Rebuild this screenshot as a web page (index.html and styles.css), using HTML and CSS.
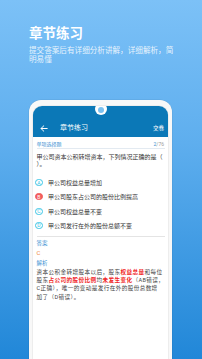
FILE: index.html
```html
<!DOCTYPE html>
<html lang="zh-CN">
<head>
<meta charset="utf-8">
<title>章节练习</title>
<link rel="stylesheet" href="styles.css">
</head>
<body>
<div class="page">
  <header class="hero">
    <h1 class="hero-title">章节练习</h1>
    <p class="hero-sub">提交答案后有详细分析讲解，详细解析，简明易懂</p>
  </header>
  <div class="phone">
    <div class="screen">
      <div class="appbar">
        <div class="notch"><span class="camera"></span></div>
        <div class="nav">
          <svg class="back" viewBox="0 0 8 7" width="8" height="7"><path d="M7.2 3.5H1M3.8 0.8L1 3.5L3.8 6.2" fill="none" stroke="#fff" stroke-width="1" stroke-linecap="round" stroke-linejoin="round"/></svg>
          <span class="nav-title">章节练习</span>
          <span class="nav-action">交卷</span>
        </div>
      </div>
      <div class="content">
        <div class="type-row">
          <span class="type">单项选择题</span>
          <span class="progress"><span class="cur">2</span>/76</span>
        </div>
        <p class="question">甲公司资本公积转增资本，下列情况正确的是（ ）。</p>
        <ul class="options">
          <li class="option"><span class="mark">A</span><span>甲公司权益总量增加</span></li>
          <li class="option wrong"><span class="mark">B</span><span>甲公司股东占公司的股份比例提高</span></li>
          <li class="option"><span class="mark">C</span><span>甲公司权益总量不变</span></li>
          <li class="option"><span class="mark">D</span><span>甲公司发行在外的股份总额不变</span></li>
        </ul>
        <div class="answer">
          <div class="label">答案</div>
          <div class="answer-value">C</div>
          <div class="label">解析</div>
          <p class="analysis">资本公积金转增股本以后，股东<span class="hl">权益总量</span>和每位<br>股东<span class="hl">占公司的股份比例</span>均<span class="hl">未发生变化</span>（AB错误，<br>C正确），唯一的变动是发行在外的股份总数增<br>加了（D错误）。</p>
        </div>
      </div>
    </div>
  </div>
</div>
</body>
</html>
```
FILE: styles.css
```css
* { box-sizing: border-box; }
html, body { margin: 0; padding: 0; }
body {
  width: 202px;
  height: 359px;
  overflow: hidden;
  font-family: Roboto, "Noto Sans CJK SC", sans-serif;
  background: linear-gradient(180deg, #7cc1f7 0%, #5eaeee 40%, #2187d8 100%);
}
.page {
  display: flex;
  flex-direction: column;
  height: 359px;
}
.hero {
  padding: 25px 22px 0 29px;
  color: #fff;
}
.hero-title {
  margin: 0;
  font-size: 13.5px;
  line-height: 16px;
  font-weight: 700;
  letter-spacing: 0;
}
.hero-sub {
  margin: 4.5px 0 0;
  font-size: 7.6px;
  line-height: 9px;
  color: rgba(255,255,255,0.85);
}
.phone {
  margin: 36px 0 0 29px;
  width: 143px;
  flex: 1;
  background: #f8f8f8;
  border-radius: 12px 12px 0 0;
  padding: 6px 4px 0 4px;
  box-shadow: 0 0 0 0.5px rgba(0,0,0,0.08);
  display: flex;
}
.screen {
  flex: 1;
  background: #fff;
  border-radius: 9px 9px 0 0;
  overflow: hidden;
  box-shadow: 0 0 0 0.5px #e2e2e2;
}
.appbar {
  position: relative;
  background: #0b78b7;
  height: 31px;
  padding-top: 14px;
}
.notch {
  position: absolute;
  left: 50%;
  top: -3px;
  width: 12px;
  height: 12px;
  margin-left: -6px;
  border-radius: 50%;
  background: #fff;
  display: flex;
  align-items: center;
  justify-content: center;
}
.camera {
  width: 6px;
  height: 6px;
  border-radius: 50%;
  background: #7cc1f0;
  margin-top: 2px;
}
.nav {
  height: 17px;
  display: flex;
  align-items: center;
  padding: 0 4px 0 7px;
  color: #fff;
}
.back { display: block; }
.nav-title {
  margin-left: 12px;
  font-size: 7px;
  line-height: 17px;
  flex: 1;
}
.nav-action {
  font-size: 5.5px;
  line-height: 17px;
}
.content {
  padding: 0 3.5px 0 3.5px;
  color: #333;
}
.type-row {
  display: flex;
  justify-content: space-between;
  padding-top: 4.5px;
  height: 12px;
  line-height: 7px;
  font-size: 5px;
  border-bottom: 0.5px solid #e3eaf1;
}
.type { color: #3a8fd2; }
.progress { color: #999; padding-right: 0.5px; }
.cur { color: #3a8fd2; }
.question {
  margin: 4.3px 0 0;
  font-size: 6px;
  line-height: 7.5px;
  color: #333;
}
.options {
  list-style: none;
  margin: 7.6px 0 0 -1.2px;
  padding: 0;
}
.option {
  height: 14.3px;
  display: flex;
  align-items: center;
  font-size: 6px;
  color: #333;
}
.mark {
  width: 7.2px;
  height: 7.2px;
  border-radius: 50%;
  border: 0.8px solid #3cc6e6;
  color: #3cc6e6;
  font-size: 5px;
  line-height: 6px;
  display: flex;
  align-items: center;
  justify-content: center;
  margin-right: 5.6px;
  flex: none;
}
.wrong .mark {
  background: #f25c5c;
  border-color: #f25c5c;
  color: #fff;
}
.answer {
  margin-top: 3px;
  border-top: 0.7px solid #e4e4e4;
  padding-top: 1.5px;
}
.label {
  height: 10px;
  line-height: 10px;
  font-size: 5.5px;
  color: #3a8fd2;
}
.answer-value {
  height: 10px;
  line-height: 10px;
  font-size: 6px;
  color: #f0883a;
}
.analysis {
  margin: 0;
  font-size: 5.6px;
  letter-spacing: 0.4px;
  line-height: 8.15px;
  white-space: nowrap;
  color: #444;
}
.hl {
  color: #f01c1c;
  font-weight: 700;
}
```
